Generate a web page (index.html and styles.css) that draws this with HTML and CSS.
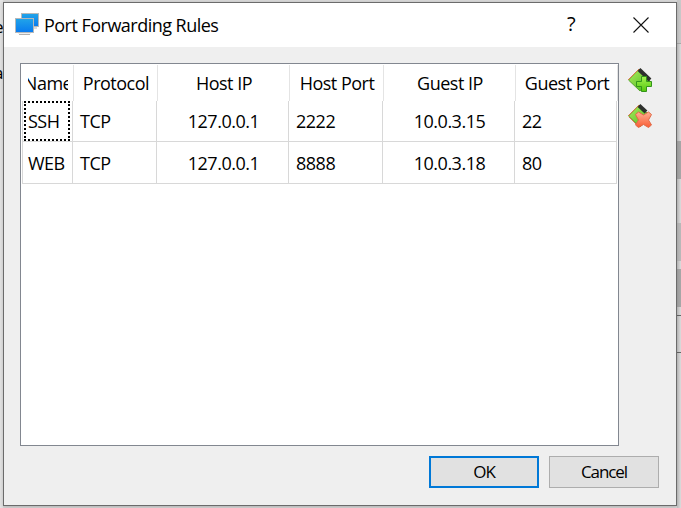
FILE: index.html
```html
<!DOCTYPE html>
<html lang="en">
<head>
<meta charset="utf-8">
<title>Port Forwarding Rules</title>
<link rel="stylesheet" href="styles.css">
</head>
<body>
<div class="behind-left"><span class="frag frag-e">e</span><span class="frag frag-a">a</span></div>
<div class="behind-right"><i class="gap-top"></i><i class="bar dark"></i><i class="space"></i><i class="bar mid"></i><i class="space small"></i><i class="bar dark"></i><i class="field"></i></div>
<main class="dialog">
  <header class="titlebar">
    <svg class="app-icon" width="24" height="23" viewBox="0 0 24 23">
      <defs><linearGradient id="screen" x1="0" y1="0" x2="0" y2="1"><stop offset="0" stop-color="#22a5e8"/><stop offset="1" stop-color="#087af0"/></linearGradient></defs>
      <rect x="6.5" y=".5" width="17" height="13" fill="url(#screen)" stroke="#b5b8ba"/>
      <path d="M18 14.5h4v1h-4z" fill="#b5b8ba"/>
      <rect x=".5" y="5.500" width="18" height="14" fill="url(#screen)" stroke="#b5b8ba"/>
      <path d="M4 21.500h11" stroke="#b0b0b0"/><path d="M3 20.500h13" stroke="#eee"/>
    </svg>
    <h1>Port Forwarding Rules</h1>
    <span class="help">?</span>
    <svg class="close" width="16" height="16" viewBox="0 0 16 16"><path d="M.5.5l15 15M15.500.5l-15 15" stroke="#111" stroke-width="1.100" fill="none"/></svg>
  </header>
  <section class="content">
    <div class="table">
      <div class="row head"><div class="name"><span>Name</span></div><div>Protocol</div><div>Host IP</div><div>Host Port</div><div>Guest IP</div><div>Guest Port</div></div>
      <div class="row first"><div class="focused">SSH</div><div>TCP</div><div class="ip">127.0.0.1</div><div>2222</div><div class="ip">10.0.3.15</div><div>22</div></div>
      <div class="row"><div>WEB</div><div>TCP</div><div class="ip">127.0.0.1</div><div>8888</div><div class="ip">10.0.3.18</div><div>80</div></div>
    </div>
    <div class="tools">
      <svg width="26" height="26" viewBox="0 0 26 26">
        <defs>
          <linearGradient id="green" x1="0" y1="0" x2="1" y2="1"><stop offset="0" stop-color="#b2ed61"/><stop offset="1" stop-color="#42b817"/></linearGradient>
          <linearGradient id="plus" x1="0" y1="0" x2="0" y2="1"><stop offset="0" stop-color="#a4f353"/><stop offset="1" stop-color="#55c70d"/></linearGradient>
          <linearGradient id="red" x1="0" y1="0" x2="0" y2="1"><stop offset="0" stop-color="#ffb092"/><stop offset="1" stop-color="#fa5c34"/></linearGradient>
        </defs>
        <path d="M1.500 13L12 2l11 11-10 11z" fill="url(#green)" stroke="#56a42c"/>
        <path d="M1 13L12 2" stroke="#d97848"/>
        <path d="M12 2.500L23 13" stroke="#2d302d" stroke-width="4"/>
        <path d="M14.500 9.500h5v5h5v5h-5v5h-5v-5h-5v-5h5z" fill="url(#plus)" stroke="#32951a"/>
      </svg>
      <svg width="26" height="26" viewBox="0 0 26 26">
        <path d="M1.500 13L12 2l11 11-10 11z" fill="url(#green)" stroke="#56a42c"/>
        <path d="M1 13L12 2M2 14l8 8" stroke="#d97848"/>
        <path d="M12 2.500L19 9" stroke="#2d302d" stroke-width="4"/>
        <path d="M8.500 11.500L11.500 9l5 3 5-3 3 2.500-3 5.500 3 5-3 2.500-5-3-5 3-3-2.500 3-5z" fill="url(#red)" stroke="#e16a48"/>
      </svg>
    </div>
  </section>
  <footer class="actions"><button class="primary">OK</button><button>Cancel</button></footer>
</main>
</body>
</html>
```
FILE: styles.css
```css
*, *::after { box-sizing: border-box; }
body {
  margin: 0;
  width: 681px;
  height: 508px;
  overflow: hidden;
  display: grid;
  grid-template-columns: 3px 674px 4px;
  background: #d9d9d9;
  color: #000;
  font: 18px/24px "Open Sans", "Noto Sans", sans-serif;
  letter-spacing: -0.5px;
}
.behind-left { grid-column: 1; grid-row: 1; overflow: hidden; padding-top: 15px; background: #e4e4e4; }
.frag { display: block; width: 9px; margin-left: -6px; height: 46px; font-size: 17px; }
.behind-right { grid-column: 3; grid-row: 1; display: flex; flex-direction: column; background: linear-gradient(90deg, #c4c4c4, #dcdcdc); }
.behind-right i { flex: none; }
.gap-top { height: 141px; background: linear-gradient(#c9c9c9 43px, #aaa 43px 44px, transparent 44px); }
.bar { height: 38px; }
.dark { background: #a8a8a8; }
.mid { background: #bababa; }
.space { height: 44px; }
.space.small { height: 8px; }
.field { height: 38px; margin-top: 8px; border: solid #666; border-width: 1px 0; }
.dialog {
  grid-column: 2;
  grid-row: 1;
  height: 504px;
  margin-top: 2px;
  display: flex;
  flex-direction: column;
  border: 1px solid #6b6b6b;
  background: #efefef;
  box-shadow: 0 1px 4px #0003;
  z-index: 1;
}
.titlebar { height: 44px; flex: none; display: flex; padding: 10px 27px 0 11px; background: #fff; }
.app-icon { flex: none; }
h1 { margin: 0 0 0 5px; width: 523px; font: inherit; letter-spacing: -0.52px; }
.help { width: 10px; font-size: 20px; margin-top: -1px; }
.close { margin: 4px 0 0 auto; flex: none; }
.content { display: flex; padding: 16px 0 0 16px; }
.table { width: 599px; height: 383px; border: 1px solid #828790; background: #fff; padding-left: 1px; }
.row { display: grid; grid-template-columns: 51px 84px 132px 94px 132px 102px; width: 595px; height: 42px; border-bottom: 1px solid #d8d8d8; }
.row div { border-right: 1px solid #d8d8d8; padding: 9px 0 0 7px; white-space: nowrap; }
.row div:first-child { border-left: 1px solid #d8d8d8; padding-left: 5px; }
.row .ip { text-align: center; padding-left: 2px; }
.row.head { width: 596px; grid-template-columns: 52px 84px 132px 94px 132px 102px; height: 37px; padding-top: 1px; border: 0; }
.row.head div { padding: 6px 0 0 1px; text-align: center; border-color: #e4e4e4; }
.row.head .name { border-left: 0; padding-left: 6px; }
.name span { display: flex; justify-content: center; width: 40px; overflow: hidden; }
.row.first { height: 41px; }
.row.first div { padding-top: 8px; }
.row.first .focused { position: relative; }
.focused::after { content: ""; position: absolute; left: 1px; top: 0; width: 46px; height: 40px; border: 2px dotted #000; }
.tools { display: flex; flex-direction: column; gap: 10px; padding: 4px 0 0 8px; }
.actions { display: flex; justify-content: flex-end; gap: 10px; padding: 10px 17px 0 0; }
button { width: 110px; height: 32px; border: 1px solid #adadad; background: #e1e1e1; color: #000; padding: 0; font: 17px/24px "Open Sans", sans-serif; letter-spacing: -1.1px; }
button.primary { border: 2px solid #0078d7; }
```
